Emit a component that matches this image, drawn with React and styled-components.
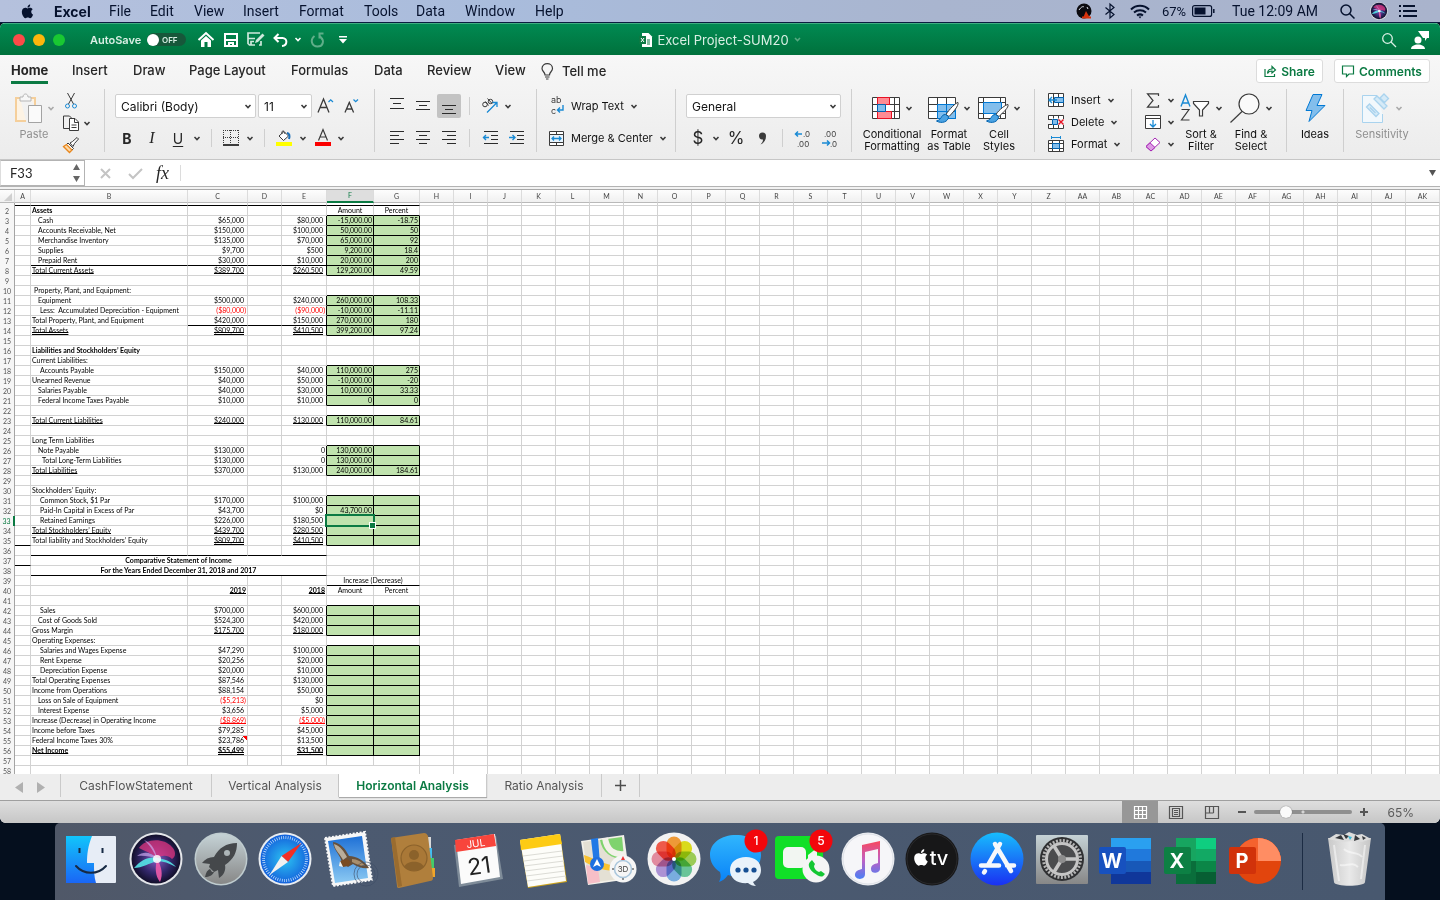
import { useState } from "react";
import styled, { createGlobalStyle, css } from "styled-components";

const UI = `Inter, "Liberation Sans", sans-serif`;
const CELL = `Lato, "Open Sans", sans-serif`;

/* ---------- data ---------- */

const menus = [
  ["Excel", 55], ["File", 41], ["Edit", 44], ["View", 49], ["Insert", 56], ["Format", 65],
  ["Tools", 52], ["Data", 49], ["Window", 70], ["Help", 40],
];

const tabs = [
  ["Home", 61], ["Insert", 61], ["Draw", 56], ["Page Layout", 102], ["Formulas", 83],
  ["Data", 53], ["Review", 68], ["View", 46],
];

const sheets = [
  ["CashFlowStatement", 151], ["Vertical Analysis", 127], ["Horizontal Analysis", 148], ["Ratio Analysis", 115],
];

const columns = [["A", 16], ["B", 157], ["C", 60], ["D", 34], ["E", 45], ["F", 47], ["G", 46]];
const extra = "H I J K L M N O P Q R S T U V W X Y Z AA AB AC AD AE AF AG AH AI AJ AK".split(" ");

// line and label: u single underline, d double underline
const sheet = {
  2: { b: "Assets", bold: true, f: "Amount", g: "Percent", head: true },
  3: { b: "Cash", in: 6, c: "$65,000", e: "$80,000", f: "-15,000.00", g: "-18.75" },
  4: { b: "Accounts Receivable, Net", in: 6, c: "$150,000", e: "$100,000", f: "50,000.00", g: "50" },
  5: { b: "Merchandise Inventory", in: 6, c: "$135,000", e: "$70,000", f: "65,000.00", g: "92" },
  6: { b: "Supplies", in: 6, c: "$9,700", e: "$500", f: "9,200.00", g: "18.4" },
  7: { b: "Prepaid Rent", in: 6, c: "$30,000", e: "$10,000", f: "20,000.00", g: "200" },
  8: { b: "Total Current Assets", c: "$389,700", e: "$260,500", f: "129,200.00", g: "49.59", line: "u", label: "u" },
  10: { b: "Property, Plant, and Equipment:", in: 2 },
  11: { b: "Equipment", in: 6, c: "$500,000", e: "$240,000", f: "260,000.00", g: "108.33" },
  12: { b: "Less:  Accumulated Depreciation - Equipment", in: 8, c: "($80,000)", e: "($90,000)", f: "-10,000.00", g: "-11.11" },
  13: { b: "Total Property, Plant, and Equipment", c: "$420,000", e: "$150,000", f: "270,000.00", g: "180" },
  14: { b: "Total Assets", c: "$809,700", e: "$410,500", f: "399,200.00", g: "97.24", line: "d", label: "d" },
  16: { b: "Liabilities and Stockholders’ Equity", bold: true },
  17: { b: "Current Liabilities:" },
  18: { b: "Accounts Payable", in: 8, c: "$150,000", e: "$40,000", f: "110,000.00", g: "275" },
  19: { b: "Unearned Revenue", c: "$40,000", e: "$50,000", f: "-10,000.00", g: "-20" },
  20: { b: "Salaries Payable", in: 6, c: "$40,000", e: "$30,000", f: "10,000.00", g: "33.33" },
  21: { b: "Federal Income Taxes Payable", in: 6, c: "$10,000", e: "$10,000", f: "0", g: "0" },
  23: { b: "Total Current Liabilities", c: "$240,000", e: "$130,000", f: "110,000.00", g: "84.61", line: "u", label: "u" },
  25: { b: "Long Term Liabilities" },
  26: { b: "Note Payable", in: 6, c: "$130,000", e: "0", f: "130,000.00" },
  27: { b: "Total Long-Term Liabilities", in: 10, c: "$130,000", e: "0", f: "130,000.00" },
  28: { b: "Total Liabilities", c: "$370,000", e: "$130,000", f: "240,000.00", g: "184.61", label: "u" },
  30: { b: "Stockholders’ Equity:" },
  31: { b: "Common Stock, $1 Par", in: 8, c: "$170,000", e: "$100,000" },
  32: { b: "Paid-In Capital in Excess of Par", in: 8, c: "$43,700", e: "$0", f: "43,700.00" },
  33: { b: "Retained Earnings", in: 8, c: "$226,000", e: "$180,500" },
  34: { b: "Total Stockholders’ Equity", c: "$439,700", e: "$280,500", line: "u", label: "u" },
  35: { b: "Total liability and Stockholders’ Equity", c: "$809,700", e: "$410,500", line: "d" },
  37: { title: "Comparative Statement of Income" },
  38: { title: "For the Years Ended December 31, 2018 and 2017" },
  39: { change: "Increase (Decrease)" },
  40: { c: "2019", e: "2018", f: "Amount", g: "Percent", head: true, line: "u" },
  42: { b: "Sales", in: 8, c: "$700,000", e: "$600,000" },
  43: { b: "Cost of Goods Sold", in: 6, c: "$524,300", e: "$420,000" },
  44: { b: "Gross Margin", c: "$175,700", e: "$180,000", line: "u" },
  45: { b: "Operating Expenses:" },
  46: { b: "Salaries and Wages Expense", in: 8, c: "$47,290", e: "$100,000" },
  47: { b: "Rent Expense", in: 8, c: "$20,256", e: "$20,000" },
  48: { b: "Depreciation Expense", in: 8, c: "$20,000", e: "$10,000" },
  49: { b: "Total Operating Expenses", c: "$87,546", e: "$130,000" },
  50: { b: "Income from Operations", c: "$88,154", e: "$50,000" },
  51: { b: "Loss on Sale of Equipment", in: 6, c: "($5,213)", e: "$0" },
  52: { b: "Interest Expense", in: 6, c: "$3,656", e: "$5,000" },
  53: { b: "Increase (Decrease) in Operating Income", c: "($8,869)", e: "($5,000)", line: "u" },
  54: { b: "Income before Taxes", c: "$79,285", e: "$45,000" },
  55: { b: "Federal Income Taxes 30%", c: "$23,786", e: "$13,500", note: true },
  56: { b: "Net Income", c: "$55,499", e: "$31,500", line: "d", label: "u", bold: true },
};

const greenRanges = [[3, 8], [11, 14], [18, 21], [23, 23], [26, 28], [31, 35], [42, 44], [46, 56]];
const isGreen = (n) => greenRanges.some(([a, z]) => n >= a && n <= z);
const darkA = [1, 35, 37];
const darkB = [1, 7, 36, 38];
const darkCE = [1, 7, 13, 36, 38];
const darkFG = (n) => n === 1 || n === 39 || isGreen(n) || isGreen(n + 1);

/* ---------- small icons ---------- */

const Svg = styled.svg`
  display: block;
  flex: none;
  overflow: visible;
`;

const Ico = ({ w = 16, h = 16, sw = 1, c = "#3b3b3b", children }) => (
  <Svg width={w} height={h} viewBox={`0 0 ${w} ${h}`} fill="none" stroke={c} strokeWidth={sw} aria-hidden="true">
    {children}
  </Svg>
);

const Chev = ({ c = "#3b3b3b", w = 6 }) => (
  <Svg width={w} height="5" viewBox="0 0 6 5" fill="none" stroke={c} strokeWidth="1.5" aria-hidden="true">
    <path d="M.5 1 3 3.6 5.5 1" />
  </Svg>
);

const lineIcon = (rows) => (
  <Ico w={14} h={14} c="#2b2b2b">
    {rows.map(([y, x, w]) => <path key={y} d={`M${x} ${y + 0.5}h${w}`} />)}
  </Ico>
);

const apple = "M11.2 8.3c0-1.7 1.4-2.5 1.5-2.6-.8-1.2-2.1-1.4-2.5-1.4-1.1-.1-2.1.6-2.6.6s-1.4-.6-2.3-.6C4.100 4.300 3 5 2.400 6c-1.200 2.200-.3 5.300.9 7 .6.8 1.300 1.800 2.200 1.700.9 0 1.200-.6 2.300-.6s1.400.6 2.300.6 1.500-.8 2.100-1.700c.7-.9.9-1.900.9-1.900s-1.900-.7-1.900-2.800zM9.500 3.200c.5-.6.8-1.400.7-2.200-.7 0-1.500.5-2 1-.4.5-.8 1.300-.7 2.100.8.1 1.600-.4 2-.9z";

const icons = {
  paste: (
    <Ico w={28} h={31}>
      <path stroke="#f5cf9b" strokeWidth="2" fill="#fdf3e4" d="M6 5H2v23h10M15 5h6v7" />
      <path stroke="#b5b5b5" fill="#f7f7f7" d="M6 8V4h3c0-4 5-4 5 0h3v4z" />
      <path stroke="#a3a3a3" fill="#fafafa" d="M14.500 12.500h13v17h-13z" />
    </Ico>
  ),
  cut: (
    <Ico>
      <path d="M4.500 0l6 11M11.500 0l-6 11" />
      <circle cx="4.500" cy="13" r="2" stroke="#1a8ad4" /><circle cx="11.500" cy="13" r="2" stroke="#1a8ad4" />
    </Ico>
  ),
  copy: (
    <Ico>
      <path d="M6 13.500H.5V1h6l2 2" /><path fill="#fff" d="M6.500 3.500h5.500l3.500 3.500v8.500h-9z" /><path d="M11.500 3.500v4h4M8.500 10h5M8.500 12.500h5" />
    </Ico>
  ),
  brush: (
    <Ico>
      <path fill="#fff" d="M7 6l2.500-1.500L14 .5l1.500 1.500-4 4.500-1.500 3z" />
      <path fill="#fff" d="M5 6l5.500 5.500-1.500 1.500L3.500 7.500z" />
      <path d="M3.500 7.500L.5 9.500l6 6L9 13z" fill="#ffd9a6" stroke="#e8871e" strokeWidth="1.300" />
    </Ico>
  ),
  grow: <Ico w={18} h={18}><path d="M1 15.500L6.500 2l5.500 13.500M3 10.500h7" strokeWidth="1.300" /><path d="M11.500 5l2.200-2.200L16 5" stroke="#1a8ad4" strokeWidth="1.300" /></Ico>,
  shrink: <Ico w={16} h={18}><path d="M1 15.500l4.300-10 4.300 10M2.500 12h5.500" strokeWidth="1.300" /><path d="M9.500 2.500L11.700 4.700 14 2.500" stroke="#1a8ad4" strokeWidth="1.300" /></Ico>,
  borders: (
    <Ico><path strokeDasharray="1 1" d="M.5 0v14M15.500 0v14M7.500 0v14M0 .5h16M0 7.500h16" /><path stroke="#000" d="M0 15h16" strokeWidth="1.500" /></Ico>
  ),
  fill: (
    <Ico h={18}>
      <path fill="#fff" d="M3 7l5-4.500 4.500 4.500-5 4.500z" /><path d="M6 5c-1-3 2-5 3 0" />
      <path d="M11 4c2.500 0 3 3 2 6" stroke="#1a6fb8" strokeWidth="2" /><path d="M0 15h16" stroke="#ffff00" strokeWidth="4" />
    </Ico>
  ),
  color: <Ico h={18}><path d="M3.500 11.500L8 .5l4.500 11M5 8h6" strokeWidth="1.200" /><path d="M0 15h16" stroke="#fb0000" strokeWidth="4" /></Ico>,
  top: lineIcon([[-1, 0, 14], [4, 3, 8], [9, 0, 14]]),
  middle: lineIcon([[2, 0, 14], [6, 3, 8], [10, 0, 14]]),
  bottom: lineIcon([[6, 0, 14], [10, 3, 8], [14, 0, 14]]),
  left: lineIcon([[0, 0, 14], [4, 0, 9], [8, 0, 14], [12, 0, 9]]),
  center: lineIcon([[0, 0, 14], [4, 3, 8], [8, 0, 14], [12, 3, 8]]),
  right: lineIcon([[0, 0, 14], [4, 5, 9], [8, 0, 14], [12, 5, 9]]),
  orient: (
    <Ico>
      <circle cx="3" cy="6.500" r="2.300" /><path d="M3.500 3.500l3 4M5.500.5l4.500 5" /><circle cx="8.500" cy="3.500" r="2.200" />
      <path d="M5 14.500l10-10M10.500 4.500h4.500V9" stroke="#1a8ad4" strokeWidth="1.300" />
    </Ico>
  ),
  outdent: <Ico w={15} h={14} c="#2b2b2b"><path d="M1 .5h14M8 4.500h7M8 8.500h7M1 12.500h14" /><path d="M6 6.500H.8M3 4L.5 6.500 3 9" stroke="#1a8ad4" strokeWidth="1.400" /></Ico>,
  indent: <Ico w={15} h={14} c="#2b2b2b"><path d="M1 .5h14M8 4.500h7M8 8.500h7M1 12.500h14" /><path d="M0 6.500h5.200M3.500 4L6 6.500 3.500 9" stroke="#1a8ad4" strokeWidth="1.400" /></Ico>,
  merge: (
    <Ico w={15} h={15}><path fill="#fff" d="M.5.5h14v14H.5zM7.500.5v3M7.500 11.500v3" /><path fill="#e8f4fd" stroke="#3b3b3b" d="M.5 3.500h14v8H.5z" /><path d="M3 7.500h9M5 5.500l-2 2 2 2M10 5.500l2 2-2 2" stroke="#1a8ad4" strokeWidth="1.300" /></Ico>
  ),
  conditional: (
    <Ico w={28} h={22}>
      <path fill="#fff" d="M.5.5h27v21H.5zM.5 7.500h27M.5 14.500h27M5.500.5v21M22.500.5v21" />
      <path fill="#ff8b93" stroke="#e81123" d="M5.500.5h12v7h-12zM5.500 14.500h14v7h-14z" /><path fill="#83beec" stroke="#0063b1" d="M5.500 7.500h8v7h-8z" />
    </Ico>
  ),
  table: (
    <Ico w={30} h={28}>
      <path fill="#fff" d="M.5 3.500h27v21H.5zM.5 10.500h27M.5 17.500h27M9.500 3.500v21M18.500 3.500v21" />
      <path fill="#83beec" stroke="#0078d4" d="M9.500 10.500h18v14h-18zM9.500 17.500h18M18.500 10.500v14" />
      <path fill="#fff" d="M30 8.500c-2 0-9 7-12 12l3 2c4-4 10-11 9-14z" /><path fill="#4ba3e3" stroke="#0063b1" d="M17.500 20.500c-5 0-3 5-9 6.500 5 3 12 1 12-4.500z" />
    </Ico>
  ),
  styles: (
    <Ico w={30} h={28}>
      <path fill="#fff" d="M.5 3.500h27v21H.5zM.5 8.500h27M.5 19.500h27M5.500 3.500v21M22.500 3.500v21" />
      <path fill="#83beec" stroke="#0078d4" d="M5.500 8.500h18v11h-18z" />
      <path fill="#fff" d="M30 10.500c-2 0-9 5-12 10l3 2c4-4 10-9 9-12z" /><path fill="#4ba3e3" stroke="#0063b1" d="M17.500 20.500c-5 0-3 5-9 6.500 5 3 12 1 12-4.500z" />
    </Ico>
  ),
  insert: (
    <Ico h={14}><path fill="#fff" d="M.5.5h15v13H.5zM5.500.5v13M10.500.5v13" /><path fill="#83beec" stroke="#0063b1" d="M6.500 4.500h9v5h-9z" /><path d="M9 7H1M4 4L1 7l3 3" stroke="#1a8ad4" strokeWidth="1.400" /></Ico>
  ),
  remove: (
    <Ico h={14}><path fill="#fff" d="M.5 4V.5h15V4M.5 10v3.500h15V10M5.500.5v3M10.500.5v3M5.500 10v3.500M10.500 10v3.500" /><path d="M0 4.500h4M0 9.500h4" /><path fill="#83beec" stroke="#0063b1" d="M4.500 4.500h5v5h-5z" /><path d="M10.500 4.500l5 5M15.500 4.500l-5 5" stroke="#e81123" strokeWidth="1.400" /></Ico>
  ),
  format: (
    <Ico><path fill="#fff" d="M.5 4.500h15v11H.5zM4.500 4.500v11M11.500 4.500v11" /><path d="M.5 7.500h15M.5 12.500h15" /><path fill="#83beec" stroke="#0063b1" d="M4.500 7.500h7v5h-7z" /><path d="M3.500 0v3M12.500 0v3M3.500 1.500h9" stroke="#1a8ad4" /></Ico>
  ),
  sigma: <Ico h={15}><path d="M13.500 3V.8H2.500L8 7.500l-5.500 6.700h11V12" strokeWidth="1.200" /></Ico>,
  down: <Ico h={14}><path fill="#fff" d="M.5.5h15v13H.5zM.5 3.500h15" /><path d="M8 5v7M5 9l3 3 3-3" stroke="#1a8ad4" strokeWidth="1.300" /></Ico>,
  eraser: <Ico h={15}><path fill="#fff" stroke="#a626b5" d="M1 9.500L10 1l5 4.500L6 14z" /><path fill="#dd9be4" stroke="#a626b5" d="M1 9.500l4-3.700 5 4.700L6 14z" /></Ico>,
  filter: (
    <Ico w={30} h={28} sw={1.200}>
      <path d="M1 12.500L5.500 1 10 12.500M2.500 9h6" stroke="#1a8ad4" strokeWidth="1.400" /><path d="M1.500 15.500h7.500L1.500 26h8" /><path fill="#fff" d="M13.500 7.500h15v2l-6 6.500v6h-3v-6l-6-6.500z" />
    </Ico>
  ),
  find: <Ico w={30} h={30}><circle cx="19" cy="11" r="10" fill="#fafafa" strokeWidth="1.200" /><path d="M12 18.500L.5 29.500" strokeWidth="1.200" /></Ico>,
  ideas: <Ico w={23} h={28}><path fill="#83beec" stroke="#0078d4" d="M9 .5h9l-5 11h8L5 27.500l3-11H2z" /></Ico>,
  sensitivity: (
    <Ico w={28} h={30} c="#a9d3ee">
      <path fill="#f2f8fc" d="M15 2.500H.5v27h20V21" />
      <path fill="#d5eaf7" strokeWidth="1.300" d="M4.500 14l3-3 9.500 9.500-3 3zM8 14.500l5.500 5.500" />
      <path fill="#d5eaf7" strokeWidth="1.300" d="M12 6l3-3 10 10-3 3zM18 5l4-4 4.500 4.500-4 4z" />
    </Ico>
  ),
};

/* ---------- layout ---------- */

const Global = createGlobalStyle`
  * { box-sizing: border-box; }
  html, body, #root { height: 100%; }
  body { margin: 0; overflow: hidden; background: #050f1e; font-family: ${UI}; color: #262626; }
  button, input, select { font: inherit; color: inherit; margin: 0; padding: 0; border: 0; background: none; }
`;

const Desktop = styled.div`
  height: 100vh;
  display: flex;
  flex-direction: column;
`;

const MenuBar = styled.header`
  display: flex;
  justify-content: space-between;
  height: 23px;
  flex: none;
  background: linear-gradient(90deg, #b5c1dd, #a9bcdc 35%, #a9b5cf 65%, #a9b3cc);
  border-bottom: 1px solid #0b1d40;
  color: #06122e;
  font-size: 14px;
`;

const MenuSide = styled.nav`
  display: flex;
  align-items: center;
  padding: ${(p) => p.$pad};
`;

const MenuItem = styled.button`
  width: ${(p) => p.$w}px;
  display: flex;
  justify-content: ${(p) => (p.$center ? "center" : "flex-start")};
  align-items: center;
  white-space: nowrap;
  font-family: ${(p) => (p.$bold ? UI : `Roboto, ${UI}`)};
  font-size: ${(p) => (p.$small ? 13 : 14)}px;
  font-weight: ${(p) => (p.$bold ? 700 : 400)};
`;

const Window = styled.main`
  flex: 1;
  min-height: 0;
  display: flex;
  flex-direction: column;
  border-radius: 5px 5px 6px 6px;
  overflow: hidden;
  background: #fff;
`;

const TitleBar = styled.div`
  display: grid;
  grid-template-columns: 1fr auto 1fr;
  align-items: center;
  height: 32px;
  flex: none;
  background: linear-gradient(#018a52, #00713c);
  border-top: 1px solid #3fae81;
  color: #d9efe4;
`;

const TitleLeft = styled.div`
  display: flex;
  align-items: center;
  padding-left: 13px;
`;

const Lights = styled.div`
  display: flex;
  gap: 8px;
  width: 77px;
`;

const Light = styled.button`
  width: 12px;
  height: 12px;
  border-radius: 50%;
  background: ${(p) => p.$c};
`;

const AutoSave = styled.label`
  display: flex;
  align-items: center;
  font-size: 11px;
  font-weight: 600;
  width: 103px;
`;

const AutoText = styled.span`
  width: 57px;
`;

const Toggle = styled.input`
  appearance: none;
  width: 39px;
  height: 13px;
  border-radius: 7px;
  background: #17573a;
  display: flex;
  align-items: center;
  &::before {
    content: "";
    width: 12px;
    height: 12px;
    border-radius: 50%;
    background: #fff;
  }
  &::after {
    content: "OFF";
    color: #d9efe4;
    font-size: 8px;
    margin-left: 3px;
  }
`;

const QuickButton = styled.button`
  width: ${(p) => p.$w}px;
  display: flex;
  justify-content: center;
`;

const DocTitle = styled.div`
  display: flex;
  align-items: center;
  gap: 5px;
  font-size: 13px;
`;

const TitleRight = styled.div`
  display: flex;
  align-items: center;
  justify-content: flex-end;
  padding-right: 5px;
`;

const Ribbon = styled.section`
  flex: none;
  background: linear-gradient(#f7f7f7, #ececec);
  border-bottom: 1px solid #c6c6c6;
  height: 105px;
`;

const TabRow = styled.nav`
  display: flex;
  align-items: center;
  height: 32px;
  padding: 0 10px 0 11px;
`;

const Tab = styled.button`
  width: ${(p) => p.$w}px;
  text-align: left;
  font-size: 13px;
  font-weight: ${(p) => (p.$active ? 700 : 500)};
  white-space: nowrap;
  span {
    display: inline-block;
    padding: 4px 0 3px;
    line-height: 16px;
    border-bottom: 3px solid ${(p) => (p.$active ? "#0b7a43" : "transparent")};
  }
`;

const TellMe = styled.button`
  display: flex;
  align-items: center;
  gap: 8px;
  font-size: 13px;
  font-weight: 500;
`;

const TabActions = styled.div`
  display: flex;
  gap: 11px;
  margin-left: auto;
`;

const Action = styled.button`
  display: flex;
  align-items: center;
  justify-content: center;
  gap: 5px;
  width: ${(p) => p.$w}px;
  height: 24px;
  background: #fff;
  border: 1px solid #dcdcdc;
  border-radius: 3px;
  color: #0b7a43;
  font-size: 12px;
  font-weight: 600;
`;

const Groups = styled.div`
  display: flex;
  padding-top: 2px;
`;

const Group = styled.div`
  display: flex;
  flex: none;
  width: ${(p) => p.$w}px;
  height: 63px;
  padding-left: ${(p) => p.$pad || 0}px;
  border-right: ${(p) => (p.$last ? 0 : 1)}px solid #cfcfcf;
`;

const TwoRows = styled.div`
  display: flex;
  flex-direction: column;
  gap: 8px;
  padding-top: 5px;
`;

const ThreeRows = styled.div`
  display: grid;
  grid-template-rows: repeat(3, 22px);
  width: ${(p) => p.$w}px;
`;

const Row = styled.div`
  display: grid;
  grid-template-columns: ${(p) => p.$cols};
  align-items: center;
  justify-items: center;
  height: 24px;
`;

const Tool = styled.button`
  display: flex;
  align-items: center;
  justify-content: center;
  width: ${(p) => (p.$on ? "24px" : "100%")};
  height: 24px;
  border-radius: 2px;
  background: ${(p) => (p.$on ? "#c3c3c3" : "none")};
  font-size: ${(p) => p.$size || 14}px;
  font-weight: ${(p) => p.$weight || 400};
  font-style: ${(p) => (p.$italic ? "italic" : "normal")};
  text-decoration: ${(p) => (p.$under ? "underline" : "none")};
  font-family: ${(p) => (p.$serif ? `"Liberation Serif", serif` : UI)};
  text-underline-offset: 2px;
`;

const Divider = styled.span`
  width: 1px;
  height: 18px;
  background: #cfcfcf;
`;

const TextTool = styled.button`
  display: flex;
  align-items: center;
  height: ${(p) => p.$h || 24}px;
  gap: 7px;
  font-size: 11px;
  color: #111;
  white-space: nowrap;
`;

const IconSlot = styled.span`
  width: ${(p) => p.$w || 16}px;
  display: flex;
  justify-content: center;
`;

const Big = styled.button`
  display: flex;
  flex-direction: column;
  align-items: center;
  gap: 4px;
  width: ${(p) => p.$w}px;
  padding-top: 3px;
  font-size: 11px;
  line-height: 12px;
  white-space: nowrap;
  color: ${(p) => (p.$off ? "#8f8f8f" : "#111")};
  height: 63px;
`;

const BigIcon = styled.span`
  display: flex;
  align-items: center;
  gap: 6px;
  height: 32px;
`;

const SelectBox = styled.div`
  display: grid;
  align-items: center;
  width: ${(p) => p.$w}px;
  height: 24px;
  background: #fff;
  border: 1px solid #d0d0d0;
  border-radius: 2px;
  select {
    grid-area: 1 / 1;
    appearance: none;
    width: 100%;
    height: 22px;
    padding-left: 5px;
    font-size: 12px;
    color: #111;
  }
  svg {
    grid-area: 1 / 1;
    justify-self: end;
    margin-right: 4px;
    pointer-events: none;
  }
`;

const FormulaBar = styled.div`
  display: flex;
  align-items: center;
  flex: none;
  height: 30px;
  padding-bottom: 3px;
  background: #fff;
  border-bottom: 1px solid #a9a9a9;
  box-shadow: inset 0 -2px #f2f2f2, inset 0 -3px #b3b3b3;
`;

const NameBox = styled.div`
  display: flex;
  align-items: center;
  justify-content: space-between;
  width: 85px;
  height: 26px;
  padding: 0 4px 0 9px;
  border: 1px solid #b3b3b3;
  border-left-color: #ddd;
  input {
    width: 50px;
    font-size: 13px;
    font-family: ${CELL};
  }
`;

const FormulaButton = styled.button`
  display: flex;
  align-items: center;
  justify-content: center;
  width: ${(p) => p.$w}px;
  height: 24px;
  font: italic 18px "Liberation Serif", serif;
`;

const FormulaInput = styled.input`
  flex: 1;
  height: 16px;
  border-left: 1px solid #dcdcdc;
  padding-left: 6px;
`;

const GridArea = styled.div`
  flex: 1;
  min-height: 0;
  overflow: hidden;
  background: #fff;
`;

/* ---------- sheet ---------- */

const Table = styled.table`
  table-layout: fixed;
  width: 100%;
  border-collapse: separate;
  border-spacing: 0;
  font-family: ${CELL};
  font-size: 7px;
  line-height: 9px;
  color: #000;
`;

const HeadCell = styled.th`
  height: 13px;
  padding: 0;
  font-weight: 400;
  color: ${(p) => (p.$on ? "#0b7a43" : "#444")};
  background: ${(p) => (p.$on ? "#dedede" : "linear-gradient(#fdfdfd, #f0f0f0)")};
  border-right: 1px solid #dcdcdc;
  border-bottom: ${(p) => (p.$on ? "2px solid #0b7a43" : "1px solid #b9b9b9")};
`;

const RowHead = styled.th`
  height: ${(p) => p.$h || 10}px;
  padding: 0;
  font-weight: 400;
  text-align: center;
  color: ${(p) => (p.$on ? "#0b7a43" : "#555")};
  background: #f6f6f6;
  border-right: ${(p) => (p.$on ? "2px solid #0b7a43" : "1px solid #a5a5a5")};
`;

const Cell = styled.td`
  height: ${(p) => p.$h || 10}px;
  padding: 0 ${(p) => p.$pr || 1}px 0 ${(p) => p.$pl || 1}px;
  overflow: hidden;
  white-space: pre;
  text-align: ${(p) => p.$align || "left"};
  font-weight: ${(p) => (p.$bold ? 700 : 400)};
  color: ${(p) => (p.$neg ? "#f00" : "inherit")};
  background: ${(p) => (p.$green ? "#c0e3ae" : "transparent")};
  border-right: 1px solid ${(p) => (p.$darkR ? "#000" : "#d2d2d2")};
  border-bottom: 1px solid ${(p) => (p.$darkB ? "#000" : "#d2d2d2")};
  ${(p) => p.$line && css`
    span {
      text-decoration: underline ${p.$line === "d" ? "double" : "solid"};
      text-decoration-thickness: 1px;
      text-decoration-skip-ink: none;
      text-underline-offset: ${p.$line === "d" ? "-1px" : "0"};
    }
  `}
  ${(p) => p.$active && css`
    position: relative;
    overflow: visible;
    &::after {
      content: "";
      position: absolute;
      inset: -2px;
      border: 2px solid #0b7a43;
    }
    &::before {
      content: "";
      position: absolute;
      right: -3px;
      bottom: -4px;
      width: 5px;
      height: 5px;
      background: #0b7a43;
      border: 1px solid #fff;
      box-sizing: content-box;
      z-index: 1;
    }
  `}
  ${(p) => p.$note && css`
    background: linear-gradient(45deg, transparent 50%, #f00 50%) top right / 4px 4px no-repeat;
  `}
`;

const Money = ({ v = "", ...rest }) => {
  const neg = v.startsWith("(");
  const pad = neg || v === "0" || v.startsWith("20") ? 1 : 3;
  return (
    <Cell $align="right" $pr={pad} $neg={neg} {...rest}>
      <span>{v}</span>
    </Cell>
  );
};

function SheetRow({ n }) {
  const r = sheet[n] || {};
  const green = isGreen(n);
  const h = n === 1 ? 3 : 10;
  const side = r.head ? "center" : "right";
  return (
    <tr>
      <RowHead scope="row" $on={n === 33} $h={h}>{n === 1 ? "" : n}</RowHead>
      <Cell $h={h} $darkB={darkA.includes(n)} />
      {r.title && <Cell colSpan={4} $align="center" $bold $darkB={n === 38}>{r.title}</Cell>}
      {n === 58 && <Cell colSpan={6} />}
      {!r.title && n !== 58 && (
        <>
          <Cell $h={h} $pl={1 + (r.in || 0)} $bold={r.bold} $line={r.label} $darkB={darkB.includes(n)}><span>{r.b}</span></Cell>
          <Money v={r.c} $h={h} $line={r.line} $bold={n === 40 || n === 56} $note={r.note} $darkB={darkCE.includes(n)} />
          <Cell $h={h} $darkB={darkCE.includes(n)} />
          <Money v={r.e} $h={h} $line={r.line} $bold={n === 40 || n === 56} $darkB={darkCE.includes(n)} $darkR={green} />
        </>
      )}
      {r.change && <Cell colSpan={2} $align="center" $darkB>{r.change}</Cell>}
      {!r.change && n !== 58 && (
        <>
          <Cell $h={h} $align={side} $green={green} $darkR={green} $darkB={darkFG(n)} $active={n === 33}>{r.f}</Cell>
          <Cell $h={h} $align={side} $green={green} $darkR={green} $darkB={darkFG(n)}>{r.g}</Cell>
        </>
      )}
      {extra.map((c) => <Cell key={c} $h={h} />)}
    </tr>
  );
}

function Sheet() {
  return (
    <Table>
      <colgroup>
        <col width="15" />
        {columns.map(([c, w]) => <col key={c} width={w} />)}
        {extra.map((c) => <col key={c} />)}
      </colgroup>
      <thead>
        <tr>
          <HeadCell>
            <Svg width="14" height="12" viewBox="0 0 14 12"><path d="M12 3v8H4z" fill="#d0d0d0" /></Svg>
          </HeadCell>
          {columns.map(([c]) => <HeadCell key={c} scope="col" $on={c === "F"}>{c}</HeadCell>)}
          {extra.map((c) => <HeadCell key={c} scope="col">{c}</HeadCell>)}
        </tr>
      </thead>
      <tbody>
        {Array.from({ length: 58 }, (_, i) => <SheetRow key={i} n={i + 1} />)}
      </tbody>
    </Table>
  );
}

/* ---------- bottom bars ---------- */

const SheetTabs = styled.nav`
  display: flex;
  flex: none;
  height: 27px;
  background: #ededed;
  border-bottom: 1px solid #9f9f9f;
`;

const TabNav = styled.div`
  display: flex;
  align-items: center;
  gap: 14px;
  width: 61px;
  height: 23px;
  padding: 4px 0 0 15px;
  border-right: 1px solid #cacaca;
`;

const SheetTab = styled.button`
  width: ${(p) => p.$w}px;
  height: 23px;
  font-size: 12px;
  font-weight: ${(p) => (p.$active ? 600 : 400)};
  color: ${(p) => (p.$active ? "#0b7a43" : "#555")};
  background: ${(p) => (p.$active ? "#fff" : "none")};
  border-right: 1px solid #cacaca;
  box-shadow: ${(p) => (p.$active ? "0 1px 1px #aaa" : "none")};
  display: flex;
  align-items: center;
  justify-content: center;
`;

const StatusBar = styled.footer`
  display: flex;
  align-items: center;
  justify-content: flex-end;
  flex: none;
  height: 22px;
  padding-right: 26px;
  background: linear-gradient(#dedede, #c6c6c6);
  font-size: 12px;
  color: #5a5a5a;
`;

const ViewButton = styled.button`
  display: flex;
  align-items: center;
  justify-content: center;
  width: 36px;
  height: 22px;
  background: ${(p) => (p.$on ? "#979797" : "none")};
`;

const ZoomButton = styled.button`
  width: 24px;
  display: flex;
  justify-content: center;
`;

const Zoom = styled.input`
  appearance: none;
  width: 98px;
  height: 12px;
  &::-webkit-slider-runnable-track {
    height: 4px;
    border-radius: 2px;
    background: radial-gradient(circle, #d5d5d5 1px, transparent 2px), #8f8f8f;
  }
  &::-webkit-slider-thumb {
    appearance: none;
    width: 12px;
    height: 12px;
    margin-top: -4px;
    border-radius: 50%;
    background: #fafafa;
    box-shadow: 0 0 1px #555;
  }
`;

const Percent = styled.span`
  width: 38px;
  text-align: right;
`;

const Dock = styled.nav`
  display: flex;
  flex: none;
  height: 77px;
  margin: 0 55px;
  padding: 0 3px 0 4px;
  border-radius: 5px 5px 0 0;
  background: linear-gradient(90deg, #505868, #4c5a70 20%, #48586f);
`;

const DockItem = styled.button`
  flex: ${(p) => (p.$w ? "none" : "1")};
  width: ${(p) => p.$w || 0}px;
  min-width: 0;
  display: flex;
  justify-content: center;
  padding-top: 8px;
`;

const DockLine = styled.span`
  width: 1px;
  height: 57px;
  margin: 10px 14px;
  background: #1c2c44;
`;

const Petal = styled.rect`
  mix-blend-mode: multiply;
`;

const Badge = ({ children }) => (
  <g>
    <circle cx="46" cy="10" r="11.500" fill="#f3070c" />
    <text x="46" y="14" textAnchor="middle" fontSize="12" fontWeight="500" fill="#fff">{children}</text>
  </g>
);

const OfficeBox = ({ c, letter }) => (
  <g>
    <rect x="1" y="16" width="27" height="27" rx="2" fill={c} />
    <text x="14" y="37" textAnchor="middle" fontSize="20" fontWeight="700" fill="#fff">{letter}</text>
  </g>
);

const petals = ["#fba23a", "#e6e61c", "#a4d65a", "#6fcfa0", "#7fb6ea", "#b59ae0", "#ee94a8", "#fb5f4e"];

const dock = [
  ["Finder", (
    <g>
      <rect x="3" y="5" width="50" height="47" rx="1" fill="#e7edf6" />
      <path d="M29 5c-4 10-5 18-5 27h7c0 7 0 14 2 20H3V5z" fill="url(#finder)" />
      <path d="M16.500 17v5M39.500 17v5" stroke="#172a44" strokeWidth="2" />
      <path d="M13 35c8 9 22 9 30 0" stroke="#172a44" strokeWidth="2" fill="none" strokeLinecap="round" />
    </g>
  )],
  ["Siri", (
    <g>
      <circle cx="28" cy="28" r="26.500" fill="#e4e6ea" /><circle cx="28" cy="28" r="24.500" fill="url(#siri)" />
      <path d="M11 17c6-9 24-11 33-1 4 4 4 10 0 12-4-4-10-4-15-1-6-5-12-7-18-10z" fill="#e0357f" opacity=".75" />
      <path d="M29 27c-8-7-14-6-20-2 8-1 13 1 20 2zM29 27C27 17 22 11 16 9c6 5 9 11 13 18z" fill="#c9a6ec" opacity=".7" />
      <path d="M6 37c7-8 15-12 23-10 9 1 15 4 19 9-7-4-13-6-19-6-7 2-15 7-23 7z" fill="#53dbe2" opacity=".95" />
      <path d="M29 28c5 8 6 16 3 23-5-6-5-15-3-23z" fill="#f05bab" opacity=".9" />
      <circle cx="29" cy="28" r="4" fill="#fff" opacity=".85" />
    </g>
  )],
  ["Launchpad", (
    <g>
      <circle cx="28" cy="28" r="26.500" fill="#bfcccf" /><circle cx="28" cy="28" r="25" fill="url(#metal)" />
      <path fill="#45484b" fillRule="evenodd" d="M44 12c-11 0-18 5-23 14-5 0-9 2-12 6l8 1-1 3 5 5 4-2 1 8c5-3 7-8 6-13 9-6 12-13 12-22zM34 19a3 3 0 110 6 3 3 0 010-6zM17 38c-4 2-4 5-5 8 4 0 8-2 9-5l-2 0z" />
    </g>
  )],
  ["Safari", (
    <g>
      <circle cx="28" cy="28" r="26.500" fill="#e9edf1" /><circle cx="28" cy="28" r="24.500" fill="url(#safari)" />
      <circle cx="28" cy="28" r="21.500" fill="none" stroke="#cfe6ff" strokeWidth="3" strokeDasharray=".7 1.550" />
      <path d="M44.500 12L24.500 25l6.500 6z" fill="#f22f25" /><path d="M12.500 44l12-19 6.500 6z" fill="#f1f1f1" />
    </g>
  )],
  ["Mail", (
    <g>
      <path d="M3 7l40-6 7 48-39 6z" fill="#f7f7f7" stroke="#f7f7f7" strokeWidth="2" strokeDasharray="2 1.500" />
      <path d="M6 10l34-5 6 42-33 5z" fill="url(#sky)" />
      <path d="M11 11c7 1 12 6 16 14 8 0 16 5 20 12-6 1-11-1-16-4l-5 3-6-4c-1-8-9-13-9-21z" fill="#66503b" />
      <path d="M12 13c7 2 10 8 13 13l-4 3c-2-5-8-9-9-16z" fill="#b9ad9a" /><path d="M30 28c5 0 10 3 13 7-5 0-9-2-13-4z" fill="#a98f6d" />
      <path d="M18 30l3 6 5-1 3-4-4-3z" fill="#7a4c22" /><path d="M18 30l-1 5 4 1z" fill="#f3f0e8" />
      <circle cx="44" cy="43" r="12" fill="none" stroke="#3d4c66" opacity=".6" /><circle cx="44" cy="43" r="9" fill="none" stroke="#3d4c66" opacity=".6" />
    </g>
  )],
  ["Contacts", (
    <g>
      <path d="M40 6h4v11h-4z" fill="#d9d9d9" /><path d="M41 17h4v10h-4z" fill="#43bdf0" /><path d="M42 27h5v10h-5z" fill="#43cc6b" /><path d="M42 37h6v9h-6z" fill="#f0a52a" />
      <path d="M4 7l33-5c2 0 3 1 4 3l5 42c0 2-1 3-3 3l-31 7c-2 0-2-1-2-2z" fill="#b07f3c" /><path d="M4 7l4-1 7 49-4 1z" fill="#9a6c2f" />
      <circle cx="27" cy="27" r="13" fill="#a97837" stroke="#8b622b" strokeWidth="1.200" /><circle cx="27" cy="24" r="5" fill="#8b622b" /><path d="M17 36c3-7 17-7 20 0-5 5-15 5-20 0z" fill="#8b622b" />
    </g>
  )],
  ["Calendar", (
    <g>
      <path d="M3 14l42-9 7 43-44 8z" fill="#7f8c99" /><path d="M5 9l39-6 5 43-39 7z" fill="#fbfbfb" /><path d="M4 9l39-6 2 12-40 6z" fill="#f8453c" />
      <text x="25" y="16" transform="rotate(-8 25 14)" textAnchor="middle" fontSize="10" fill="#fff">JUL</text>
      <text x="28" y="43" transform="rotate(-8 28 34)" textAnchor="middle" fontSize="23" fill="#222">21</text>
    </g>
  )],
  ["Notes", (
    <g>
      <path d="M4 9l40-6 7 48-39 6z" fill="#cda51e" /><path d="M4 9l40-6 6 47-38 6z" fill="#fdfdf9" /><path d="M4 9l40-6 2 10-41 6z" fill="#fdcb14" />
      <path d="M7 25l39-5M8 30l39-5M8 35l40-5M9 40l39-5M10 45l39-5M11 50l39-5" stroke="#dcdcd6" />
    </g>
  )],
  ["Maps", (
    <g>
      <path d="M0 10l43-6 6 44-42 6z" fill="#f3f1ea" /><path d="M2 11l39-5 5 41-38 5z" fill="#e4e0d4" />
      <path d="M19 9l22-3 2 22c-13 0-22-7-24-19z" fill="#7fd36e" /><path d="M3 24c12 4 22 12 42 11v5C27 41 17 38 4 31z" fill="#fac22f" />
      <path d="M24 7c2 13 9 17 20 16" stroke="#f3f1ea" strokeWidth="6" fill="none" /><path d="M5 34l12 3 2 14-12 2z" fill="#f7bfc7" /><path d="M10 8l7-1 2 26-6 1z" fill="#2079e6" />
      <circle cx="16" cy="33" r="7" fill="#1e6fe0" /><path d="M16 28l4 8-4-2-4 2z" fill="#fff" />
      <circle cx="42" cy="38" r="13.500" fill="#f6f6f6" /><circle cx="42" cy="38" r="8.500" fill="none" stroke="#a9c6dc" strokeWidth="1.500" />
      <path d="M42 25l-2 4h4z" fill="#e33" /><path d="M31 38h2M51 38h2M42 47v2" stroke="#333" />
      <text x="42" y="41" textAnchor="middle" fontSize="8" fill="#444">3D</text>
    </g>
  )],
  ["Photos", (
    <g>
      <circle cx="28" cy="28" r="26.500" fill="#f2f2f2" />
      {petals.map((c, i) => <Petal key={c} x="20.500" y="5.500" width="15" height="22" rx="7.500" fill={c} transform={`rotate(${i * 45} 28 28)`} />)}
      <circle cx="28" cy="28" r="2" fill="#fff" />
    </g>
  )],
  ["Messages", (
    <g>
      <path d="M26 4c15 0 25 8 25 20S40 45 26 45c-3 0-6 0-8-1-3 4-6 6-9 7 2-4 2-6 1-10C4 37 0 31 0 24 0 12 11 4 26 4z" fill="url(#msg)" />
      <path d="M36 26c9 0 15 5 15 13 0 6-4 10-8 12 1 2 2 3 3 4-3 0-6-1-8-3-10 1-18-4-18-13 0-8 7-13 16-13z" fill="#e9f2fa" />
      <circle cx="28" cy="39" r="2.600" fill="#164f94" /><circle cx="36" cy="39" r="2.600" fill="#164f94" /><circle cx="44" cy="39" r="2.600" fill="#164f94" />
      <Badge>1</Badge>
    </g>
  )],
  ["FaceTime", (
    <g>
      <rect x="0" y="5" width="48" height="43" rx="4" fill="#10df27" /><rect x="8" y="16" width="23" height="21" rx="5" fill="#f2f6f2" /><path d="M33 24l9-7v18l-9-6z" fill="#f2f6f2" />
      <circle cx="41" cy="38" r="13.500" fill="#f5f5f5" />
      <path d="M35 31c-3 3 0 8 4 11s8 5 10 2l1-1-4-3-2 1c-3-1-5-4-5-6l1-2-3-4z" fill="#14c733" />
      <Badge>5</Badge>
    </g>
  )],
  ["Music", (
    <g>
      <circle cx="28" cy="28" r="26.500" fill="#eceef2" /><circle cx="28" cy="28" r="25" fill="#f6f6f9" stroke="#dfe2e8" />
      <path fillRule="evenodd" d="M22 14l18-4v28c0 4-9 6-9 0 0-4 3-5 7-6V18l-13 3v22c0 7-11 6-10 0 1-4 4-4 7-5z" fill="url(#music)" />
    </g>
  )],
  ["TV", (
    <g>
      <circle cx="28" cy="28" r="26.500" fill="#171718" /><circle cx="28" cy="28" r="25" fill="none" stroke="#29292b" />
      <path d={apple} transform="translate(8 17) scale(1.200)" fill="#fff" />
      <text x="35" y="34" textAnchor="middle" fontSize="20" fontWeight="500" fill="#fff">tv</text>
    </g>
  )],
  ["App Store", (
    <g>
      <circle cx="28" cy="28" r="26.500" fill="url(#store)" />
      <path d="M31 13L19 34M26 13l16 27M12 34.500h18M38 34.500h7M16 40l-1 1.500" stroke="#f6f8fb" strokeWidth="4.500" strokeLinecap="round" fill="none" />
    </g>
  )],
  ["System Preferences", (
    <g>
      <rect x="2" y="4" width="52" height="49" rx="1" fill="url(#metal)" /><circle cx="28" cy="28" r="22" fill="#2f3032" />
      <circle cx="28" cy="28" r="18.500" fill="none" stroke="#b5b5b5" strokeWidth="3" strokeDasharray="2 1.500" /><circle cx="28" cy="28" r="15.500" fill="#4b4c4e" stroke="#c5c5c5" strokeWidth="3" />
      <path d="M28 28h15M28 28l-8-13M28 28l-8 13" stroke="#c5c5c5" strokeWidth="3.500" /><circle cx="28" cy="28" r="4" fill="#8d8d8d" />
    </g>
  )],
  ["Word", (
    <g>
      <path d="M13 7h40v11H13z" fill="#2aa0f0" /><path d="M13 18h40v12H13z" fill="#2079dc" /><path d="M13 30h40v11H13z" fill="#1858b8" /><path d="M13 41h40v12H13z" fill="#10379a" />
      <OfficeBox c="#1751bf" letter="W" />
    </g>
  )],
  ["Excel", (
    <g>
      <path d="M13 7h20v23H13z" fill="#17a560" /><path d="M33 7h20v11H33z" fill="#0fce80" /><path d="M33 18h20v12H33z" fill="#12a964" /><path d="M13 30h20v23H13z" fill="#0a6e3b" /><path d="M33 30h20v11H33z" fill="#0b8647" /><path d="M33 41h20v12H33z" fill="#075f33" />
      <OfficeBox c="#0d8044" letter="X" />
    </g>
  )],
  ["PowerPoint", (
    <g>
      <circle cx="30" cy="30" r="23" fill="#e2450d" /><path d="M30 7a23 23 0 0123 23H7A23 23 0 0130 7z" fill="#f5622e" /><path d="M30 7a23 23 0 0123 23H30z" fill="#ff8d63" />
      <OfficeBox c="#d1320a" letter="P" />
    </g>
  )],
];

const Defs = () => (
  <Svg width="0" height="0" aria-hidden="true">
    <defs>
      <linearGradient id="finder" x2="0" y2="1"><stop stopColor="#12c5fb" /><stop offset="1" stopColor="#1a66f5" /></linearGradient>
      <radialGradient id="siri"><stop stopColor="#8a5cc4" /><stop offset=".6" stopColor="#33276b" /><stop offset="1" stopColor="#120f2a" /></radialGradient>
      <linearGradient id="metal" x2="0" y2="1"><stop stopColor="#c5d2d6" /><stop offset="1" stopColor="#878787" /></linearGradient>
      <radialGradient id="safari"><stop stopColor="#2cc3f2" /><stop offset="1" stopColor="#1462dc" /></radialGradient>
      <linearGradient id="sky" x2="0" y2="1"><stop stopColor="#1e70d6" /><stop offset="1" stopColor="#8ccaf3" /></linearGradient>
      <linearGradient id="msg" x2="0" y2="1"><stop stopColor="#30b6fd" /><stop offset="1" stopColor="#0a83f8" /></linearGradient>
      <linearGradient id="music" x2="0" y2="1"><stop stopColor="#f8485e" /><stop offset=".5" stopColor="#c060c4" /><stop offset="1" stopColor="#4a7ff5" /></linearGradient>
      <linearGradient id="store" x2="0" y2="1"><stop stopColor="#17bdfd" /><stop offset="1" stopColor="#1a30f2" /></linearGradient>
      <linearGradient id="trash"><stop stopColor="#c9c9c9" /><stop offset=".5" stopColor="#e9e9e9" /><stop offset="1" stopColor="#c5c5c5" /></linearGradient>
    </defs>
  </Svg>
);

const BigTool = ({ icon, lines, w, chev = true, off }) => (
  <Big $w={w} $off={off}>
    <BigIcon>{icons[icon]}{chev && <Chev c={off ? "#a9a9a9" : undefined} />}</BigIcon>
    <span>{lines.map((l, i) => <span key={l}>{i > 0 && <br />}{l}</span>)}</span>
  </Big>
);

const Pick = ({ label, value, w }) => (
  <SelectBox $w={w}>
    <select aria-label={label} defaultValue={value}><option>{value}</option></select>
    <Chev />
  </SelectBox>
);

/* ---------- app ---------- */

function App() {
  const [active, setActive] = useState("Horizontal Analysis");
  const [tab, setTab] = useState("Home");

  return (
    <Desktop>
      <Global />
      <MenuBar>
        <MenuSide $pad="0 0 0 20px">
          <MenuItem $w={34} aria-label="Apple">
            <Svg width="15" height="17" viewBox="0 0 15 16" fill="#06122e"><path d={apple} /></Svg>
          </MenuItem>
          {menus.map(([m, w]) => <MenuItem key={m} $w={w} $bold={m === "Excel"}>{m}</MenuItem>)}
        </MenuSide>
        <MenuSide $pad="0 23px 0 0">
          <MenuItem $w={26} $center aria-label="Updates">
            <Svg width="16" height="16" viewBox="0 0 16 16"><circle cx="8" cy="8" r="7.500" fill="#0b0b10" /><path d="M3 7c2-3 4-4 5-3M11 4l1 2" stroke="#dfe3ee" fill="none" /><path d="M10 8l4 7H7z" fill="#d6330d" /><path d="M6 14.500h9" stroke="#d6330d" strokeWidth="2" /></Svg>
          </MenuItem>
          <MenuItem $w={26} $center aria-label="Bluetooth">
            <Ico w={10} h={16} c="#06122e" sw={1.200}><path d="M.5 4.500l8.500 7-4 3.500V1l4 3.500-8.500 7" /></Ico>
          </MenuItem>
          <MenuItem $w={34} $center aria-label="Wi-Fi">
            <Ico w={20} h={15} c="#06122e" sw={2}><path d="M1 5.500c5-5 13-5 18 0M4 8.500c3.500-3 8.500-3 12 0M7 11.500c2-1.500 4-1.500 6 0" /><path d="M8.500 12.500h3L10 14.500z" fill="#06122e" stroke="none" /></Ico>
          </MenuItem>
          <MenuItem $w={34} $center $small>67%</MenuItem>
          <MenuItem $w={24} $center aria-label="Battery">
            <Ico w={23} h={12} c="#06122e" sw={1.200}><rect x=".6" y=".6" width="19" height="10.800" rx="2" /><path d="M2.500 2.500h11v7h-11z" fill="#06122e" stroke="none" /><path d="M21.800 4v4" strokeWidth="1.500" /></Ico>
          </MenuItem>
          <MenuItem $w={120} $center>Tue 12:09 AM</MenuItem>
          <MenuItem $w={24} $center aria-label="Spotlight">
            <Ico w={15} h={15} c="#06122e" sw={1.500}><circle cx="6" cy="6" r="5" /><path d="M9.500 9.500l5 5" /></Ico>
          </MenuItem>
          <MenuItem $w={40} $center aria-label="Siri">
            <Svg width="16" height="16" viewBox="4 4 48 48">{dock[1][1]}</Svg>
          </MenuItem>
          <MenuItem $w={18} $center aria-label="Notification Center">
            <Ico w={18} h={12} c="#06122e" sw={2}><path d="M4 1h12M4 6h14M4 11h14M0 1h2M0 6h2M0 11h2" /></Ico>
          </MenuItem>
        </MenuSide>
      </MenuBar>

      <Window>
        <TitleBar>
          <TitleLeft>
            <Lights>
              <Light $c="#fc4b48" aria-label="Close" /><Light $c="#fdb60c" aria-label="Minimize" /><Light $c="#19c832" aria-label="Zoom" />
            </Lights>
            <AutoSave><AutoText>AutoSave</AutoText><Toggle type="checkbox" /></AutoSave>
            <QuickButton $w={25} aria-label="Home">
              <Ico w={16} h={16} c="#fff"><path d="M.5 8L8 1l7.500 7" strokeWidth="2" /><path d="M3 8.500l5-4.500 5 4.500V15h-3.500v-5h-3v5H3z" fill="#fff" stroke="none" /></Ico>
            </QuickButton>
            <QuickButton $w={25} aria-label="Save">
              <Ico w={14} h={14} c="#fff" sw={2}><path d="M1 1h12v12H1z" /><path d="M1 7h12M5 13v-3h4v3" /></Ico>
            </QuickButton>
            <QuickButton $w={25} aria-label="Save a copy">
              <Ico w={18} h={15} c="#cfe9dc" sw={1.700}><path d="M8 13H2.500L1 11.500V1h12M1 6.500h7M14 9v4h-2M4 13V9.500h3" /><path d="M8 11l1-3 6.500-6.500 2 2L11 10z" fill="#cfe9dc" stroke="none" /></Ico>
            </QuickButton>
            <QuickButton $w={24} aria-label="Undo">
              <Ico w={15} h={14} c="#fff" sw={2}><path d="M5.500 1L1.500 5l4 4M2 5h7.500c5 0 5.500 7.500-.5 8" /></Ico>
            </QuickButton>
            <QuickButton $w={11} aria-label="Undo list"><Chev c="#fff" /></QuickButton>
            <QuickButton $w={28} aria-label="Redo">
              <Ico w={15} h={16} c="#5fae89" sw={2}><path d="M8.500 1.500h5M9.500 1v5.500M4.500 4C-.5 8 2 14.500 7.500 14.500S14.500 9 11 5.500L9.500 3.500" /></Ico>
            </QuickButton>
            <QuickButton $w={24} aria-label="Customize toolbar">
              <Svg width="8" height="8" viewBox="0 0 8 8" fill="#fff"><path d="M0 0h8v1.500H0zM0 3h8L4 7.500z" /></Svg>
            </QuickButton>
          </TitleLeft>
          <DocTitle>
            <Svg width="13" height="14" viewBox="0 0 13 14"><path d="M3 0h6.500L13 3.500V14H3z" fill="#fff" /><path d="M0 3h7v8H0z" fill="#0b7a43" /><path d="M2 5l3 4M5 5L2 9" stroke="#fff" /><path d="M8 7h3M8 9h3M8 11h3" stroke="#0b7a43" /></Svg>
            Excel Project-SUM20
            <Chev c="#58aa82" w={7} />
          </DocTitle>
          <TitleRight>
            <QuickButton $w={32} aria-label="Search">
              <Ico w={14} h={14} c="#d9efe4" sw={1.300}><circle cx="5.500" cy="5.500" r="4.800" /><path d="M9 9l5 5" /></Ico>
            </QuickButton>
            <QuickButton $w={30} aria-label="Account">
              <Svg width="18" height="18" viewBox="0 0 18 18" fill="#fff"><path d="M7 0h11v7h-2l-2 3V7h-2z" /><circle cx="7" cy="9" r="3.500" /><path d="M0 18c0-6 14-6 14 0z" /></Svg>
            </QuickButton>
          </TitleRight>
        </TitleBar>

        <Ribbon>
          <TabRow>
            {tabs.map(([t, w]) => (
              <Tab key={t} $w={w} $active={t === tab} onClick={() => setTab(t)}><span>{t}</span></Tab>
            ))}
            <TellMe>
              <Ico w={13} h={17}><path d="M4 12c0-3-3-3.500-3-6.500C1-1 11.500-1 11.500 5.500c0 3-3 3.500-3 6.500zM4 14h4.500M5 16h2.500" strokeWidth="1.200" /></Ico>
              Tell me
            </TellMe>
            <TabActions>
              <Action $w={67}>
                <Ico w={12} h={12} c="#0b7a43" sw={1.200}><path d="M1 4v7.500h9.500V9M3.500 8.500c0-4 3-4.500 4.500-4.500V1.500L11.500 5 8 8V6C6 6 4.500 6.500 3.500 8.500z" /></Ico>
                Share
              </Action>
              <Action $w={96}>
                <Ico w={12} h={12} c="#0b7a43" sw={1.200}><path d="M.5 1h11v8H7l-2.500 2.500V9h-4z" /></Ico>
                Comments
              </Action>
            </TabActions>
          </TabRow>

          <Groups>
            <Group $w={105} $pad={5}>
              <BigTool icon="paste" lines={["Paste"]} w={58} off />
              <ThreeRows $w={32}>
                <Row $cols="16px 16px"><Tool aria-label="Cut">{icons.cut}</Tool></Row>
                <Row $cols="16px 16px"><Tool aria-label="Copy">{icons.copy}</Tool><Tool aria-label="Copy options"><Chev /></Tool></Row>
                <Row $cols="16px 16px"><Tool aria-label="Format Painter">{icons.brush}</Tool></Row>
              </ThreeRows>
            </Group>

            <Group $w={270} $pad={10}>
              <TwoRows>
                <Row $cols="141px 58px 24px 28px">
                  <Pick label="Font" value="Calibri (Body)" w={141} />
                  <Pick label="Font size" value="11" w={54} />
                  <Tool aria-label="Increase font size">{icons.grow}</Tool>
                  <Tool aria-label="Decrease font size">{icons.shrink}</Tool>
                </Row>
                <Row $cols="24px 26px 26px 12px 16px 24px 14px 14px 26px 12px 28px 8px">
                  <Tool $weight={700}>B</Tool>
                  <Tool $italic $serif $size={16}>I</Tool>
                  <Tool $under>U</Tool>
                  <Tool aria-label="Underline options"><Chev /></Tool>
                  <Divider />
                  <Tool aria-label="Borders">{icons.borders}</Tool>
                  <Tool aria-label="Border options"><Chev /></Tool>
                  <Divider />
                  <Tool aria-label="Fill color">{icons.fill}</Tool>
                  <Tool aria-label="Fill options"><Chev /></Tool>
                  <Tool aria-label="Font color">{icons.color}</Tool>
                  <Tool aria-label="Font color options"><Chev /></Tool>
                </Row>
              </TwoRows>
            </Group>

            <Group $w={162} $pad={9}>
              <TwoRows>
                <Row $cols="26px 26px 26px 14px 28px 8px">
                  <Tool aria-label="Top align">{icons.top}</Tool>
                  <Tool aria-label="Middle align">{icons.middle}</Tool>
                  <Tool $on aria-label="Bottom align">{icons.bottom}</Tool>
                  <Divider />
                  <Tool aria-label="Orientation">{icons.orient}</Tool>
                  <Tool aria-label="Orientation options"><Chev /></Tool>
                </Row>
                <Row $cols="26px 26px 26px 14px 28px 24px">
                  <Tool aria-label="Align left">{icons.left}</Tool>
                  <Tool aria-label="Center">{icons.center}</Tool>
                  <Tool aria-label="Align right">{icons.right}</Tool>
                  <Divider />
                  <Tool aria-label="Decrease indent">{icons.outdent}</Tool>
                  <Tool aria-label="Increase indent">{icons.indent}</Tool>
                </Row>
              </TwoRows>
            </Group>

            <Group $w={139} $pad={12}>
              <TwoRows>
                <TextTool>
                  <IconSlot $w={15}>
                    <Ico w={15} h={18} c="none"><text x="2" y="6" fontSize="9" fill="#3b3b3b">ab</text><text x="2" y="17" fontSize="9" fill="#3b3b3b">c</text><path d="M14 8v5H8.500M11 10.500L8.500 13l2.500 2.500" stroke="#1a8ad4" strokeWidth="1.400" /></Ico>
                  </IconSlot>
                  Wrap Text <Chev />
                </TextTool>
                <TextTool><IconSlot $w={15}>{icons.merge}</IconSlot>Merge &amp; Center <Chev /></TextTool>
              </TwoRows>
            </Group>

            <Group $w={176} $pad={10}>
              <TwoRows>
                <Pick label="Number format" value="General" w={155} />
                <Row $cols="24px 12px 28px 24px 16px 26px 28px">
                  <Tool $size={17}>$</Tool>
                  <Tool aria-label="Currency options"><Chev /></Tool>
                  <Tool $size={17}>%</Tool>
                  <Tool aria-label="Comma style">
                    <Svg width="9" height="13" viewBox="0 0 9 13" fill="#3b3b3b"><path d="M1 4a3.500 3.500 0 017 0c0 4-2 7-5.500 8.500C4 11 5 9.500 5 7.500 2.500 8 1 6 1 4z" /></Svg>
                  </Tool>
                  <Divider />
                  <Tool aria-label="Increase decimal">
                    <Ico w={17} h={17} c="none"><path d="M7 4H.5M3 1.500L.5 4 3 6.500" stroke="#1a8ad4" strokeWidth="1.500" /><text x="8" y="7" fontSize="8" fill="#3b3b3b">.0</text><text x="2" y="17" fontSize="8" fill="#3b3b3b">.00</text></Ico>
                  </Tool>
                  <Tool aria-label="Decrease decimal">
                    <Ico w={17} h={17} c="none"><path d="M0 13h7.500M5 10.500L7.500 13 5 15.500" stroke="#1a8ad4" strokeWidth="1.500" /><text x="2" y="7" fontSize="8" fill="#3b3b3b">.00</text><text x="8" y="17" fontSize="8" fill="#3b3b3b">.0</text></Ico>
                  </Tool>
                </Row>
              </TwoRows>
            </Group>

            <Group $w={183} $pad={11}>
              <BigTool icon="conditional" lines={["Conditional", "Formatting"]} w={58} />
              <BigTool icon="table" lines={["Format", "as Table"]} w={56} />
              <BigTool icon="styles" lines={["Cell", "Styles"]} w={44} />
            </Group>

            <Group $w={97} $pad={13}>
              <ThreeRows $w={84}>
                <TextTool $h={22}><IconSlot>{icons.insert}</IconSlot>Insert <Chev /></TextTool>
                <TextTool $h={22}><IconSlot>{icons.remove}</IconSlot>Delete <Chev /></TextTool>
                <TextTool $h={22}><IconSlot>{icons.format}</IconSlot>Format <Chev /></TextTool>
              </ThreeRows>
            </Group>

            <Group $w={155} $pad={13}>
              <ThreeRows $w={31}>
                <TextTool $h={22} aria-label="AutoSum"><IconSlot>{icons.sigma}</IconSlot><Chev /></TextTool>
                <TextTool $h={22} aria-label="Fill"><IconSlot>{icons.down}</IconSlot><Chev /></TextTool>
                <TextTool $h={22} aria-label="Clear"><IconSlot>{icons.eraser}</IconSlot><Chev /></TextTool>
              </ThreeRows>
              <BigTool icon="filter" lines={["Sort &", "Filter"]} w={50} />
              <BigTool icon="find" lines={["Find &", "Select"]} w={50} />
            </Group>

            <Group $w={57}>
              <BigTool icon="ideas" lines={["Ideas"]} w={56} chev={false} />
            </Group>
            <Group $w={96} $pad={8} $last>
              <BigTool icon="sensitivity" lines={["Sensitivity"]} w={60} off />
            </Group>
          </Groups>
        </Ribbon>

        <FormulaBar>
          <NameBox>
            <input aria-label="Name box" defaultValue="F33" />
            <Svg width="7" height="18" viewBox="0 0 7 18" fill="#666"><path d="M0 6l3.500-6L7 6zM0 12h7l-3.500 6z" /></Svg>
          </NameBox>
          <FormulaButton $w={40} aria-label="Cancel"><Ico w={11} h={11} c="#c4c4c4" sw={2}><path d="M1 1l9 9M10 1l-9 9" /></Ico></FormulaButton>
          <FormulaButton $w={20} aria-label="Enter"><Ico w={13} h={11} c="#c4c4c4" sw={2}><path d="M0 6l4 4L13 1" /></Ico></FormulaButton>
          <FormulaButton $w={35} aria-label="Insert function">fx</FormulaButton>
          <FormulaInput aria-label="Formula" />
          <FormulaButton $w={16} aria-label="Expand formula bar"><Svg width="7" height="6" viewBox="0 0 7 6" fill="#555"><path d="M0 0h7L3.500 6z" /></Svg></FormulaButton>
        </FormulaBar>

        <GridArea><Sheet /></GridArea>

        <SheetTabs>
          <TabNav>
            <Svg width="8" height="11" viewBox="0 0 8 11" fill="#b0b0b0"><path d="M8 0v11L0 5.500z" /></Svg>
            <Svg width="8" height="11" viewBox="0 0 8 11" fill="#b0b0b0"><path d="M0 0v11l8-5.500z" /></Svg>
          </TabNav>
          {sheets.map(([s, w]) => (
            <SheetTab key={s} $w={w} $active={s === active} onClick={() => setActive(s)}>{s}</SheetTab>
          ))}
          <SheetTab $w={38} aria-label="New sheet"><Ico w={11} h={11} c="#4c4c4c" sw={1.500}><path d="M5.500 0v11M0 5.500h11" /></Ico></SheetTab>
        </SheetTabs>

        <StatusBar>
          <ViewButton $on aria-label="Normal view"><Ico w={13} h={13} c="#fff" sw={1.200}><path d="M.5.5h12v12H.5zM.5 4.500h12M.5 8.500h12M4.500.5v12M8.500.5v12" /></Ico></ViewButton>
          <ViewButton aria-label="Page layout view"><Ico w={14} h={13} c="#555" sw={1.200}><path d="M.5.5h13v12H.5zM3.500 2.500h7v8h-7zM5 4.500h4M5 6.500h4M5 8.500h4" /></Ico></ViewButton>
          <ViewButton aria-label="Page break view"><Ico w={14} h={13} c="#555" sw={1.200}><path d="M.5.5h13v12H.5zM4.500.5v6.500M8.500.5v6.500M.5 7h8" /></Ico></ViewButton>
          <ZoomButton aria-label="Zoom out"><Ico w={8} h={8} c="#555" sw={2}><path d="M0 4h8" /></Ico></ZoomButton>
          <Zoom type="range" aria-label="Zoom" min="0" max="100" defaultValue="30" />
          <ZoomButton aria-label="Zoom in"><Ico w={8} h={8} c="#555" sw={2}><path d="M0 4h8M4 0v8" /></Ico></ZoomButton>
          <Percent>65%</Percent>
        </StatusBar>
      </Window>

      <Defs />
      <Dock>
        {dock.map(([name, art]) => (
          <DockItem key={name} aria-label={name}>
            <Svg width="56" height="56" viewBox="0 0 56 56">{art}</Svg>
          </DockItem>
        ))}
        <DockLine />
        <DockItem $w={65} aria-label="Trash">
          <Svg width="56" height="62" viewBox="0 0 56 62">
            <path d="M6 7l6 44c0 5 31 5 31 0l6-44z" fill="url(#trash)" />
            <path d="M12 14l5 36M43 14l-4 34M22 18c6 6 14 2 18 8M18 34c6 2 12-4 18 2" stroke="#fff" strokeWidth="2" fill="none" opacity=".5" />
            <path d="M6 8l8-5 8 1 5-3 8 3 5-1 9 5-9 3-10-1-10 1z" fill="#dcdcdc" /><path d="M13 7l6-3 3 5zM21 3l6 2-3 3zM33 4l5 4-6 2zM40 5l4 2-3 2z" fill="#35383d" /><path d="M26 5l4 1-2 3z" fill="#39b8d6" />
          </Svg>
        </DockItem>
      </Dock>
    </Desktop>
  );
}

export default App;
